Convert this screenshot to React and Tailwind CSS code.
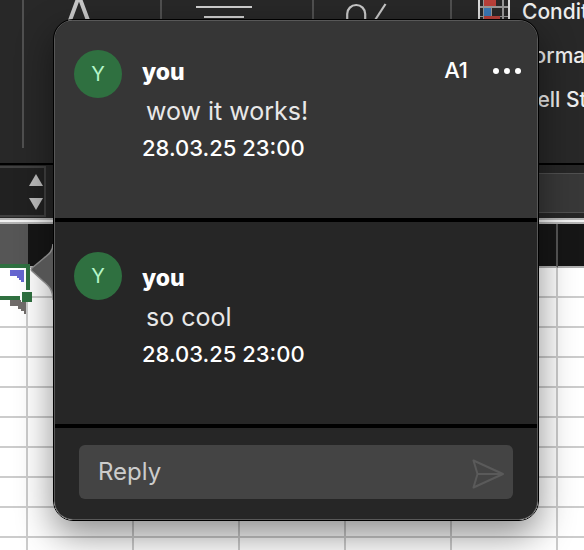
import React from "react";

const COLUMNS = [1, 2, 3, 4, 5, 6];
const ROWS = [1, 2, 3, 4, 5, 6, 7, 8, 9, 10];

const COMMENTS = [
  { id: "c1", author: "you", initial: "Y", text: "wow it works!", date: "28.03.25 23:00", cell: "A1" },
  { id: "c2", author: "you", initial: "Y", text: "so cool", date: "28.03.25 23:00" },
];

function Ribbon() {
  return (
    <div className="flex h-[163px] shrink-0 overflow-hidden bg-[#282828] text-[21px] leading-11 font-medium text-[#eeeeee]">
      <div className="h-[148px] w-6 shrink-0 border-r-2 border-[#505050]" />
      <div className="h-[148px] w-[138px] shrink-0 border-r-2 border-[#505050] pl-11">
        <svg width="24" height="36" viewBox="0 0 24 36" fill="none" stroke="#c8c8c8" strokeWidth="4" aria-hidden="true">
          <path d="M1 23 L11 -4 L21 23" />
        </svg>
      </div>
      <div className="h-[148px] w-[152px] shrink-0 border-r-2 border-[#505050] pl-[34px]">
        <svg width="56" height="30" viewBox="0 0 56 30" fill="#d0d0d0" aria-hidden="true">
          <path d="M0 6h56v2H0zM8 16h40v2H8zM0 26h56v2H0z" />
        </svg>
      </div>
      <div className="h-[148px] w-[138px] shrink-0 border-r-2 border-[#505050] pl-8">
        <svg width="48" height="40" viewBox="0 0 48 40" fill="none" stroke="#c8c8c8" strokeWidth="2.2" aria-hidden="true">
          <rect x="1.2" y="5" width="18" height="24" rx="9" />
          <path d="M39.5 4 L20 34" />
        </svg>
      </div>
      <div className="flex min-w-0 flex-1 gap-3 overflow-hidden pl-[26px] whitespace-nowrap">
        <svg className="shrink-0" width="32" height="32" viewBox="0 0 32 32" aria-hidden="true">
          <path d="M6 0h12v6H6zM6 16h16v6H6z" fill="#b8403a" />
          <path d="M6 8h7v8H6z" fill="#3b78b5" />
          <path d="M0 0h2v32H0zM30 0h2v32h-2z" fill="#dddddd" />
          <path d="M5 0h1v32H5zM24 0h2v32h-2zM2 6h28v2H2zM13 8h1v8h-1zM2 16h4v1H2zM22 16h8v1h-8z" fill="#999999" />
        </svg>
        <ul className="-mt-2.5">
          <li>Conditional Formatting</li>
          <li>Format as Table</li>
          <li>Cell Styles</li>
        </ul>
      </div>
    </div>
  );
}

function FormulaBar() {
  return (
    <div className="flex h-[55px] shrink-0 border-t-2 border-black bg-[#262626]">
      <div className="mt-px mb-px flex w-[46px] shrink-0 flex-col items-end justify-center gap-3 border-y-2 border-r-2 border-[#404040] bg-[#212121] pr-px">
        <svg width="14" height="12" viewBox="0 0 14 12" fill="#bcbcbc" aria-hidden="true"><path d="M7 0 14 12H0z" /></svg>
        <svg width="14" height="12" viewBox="0 0 14 12" fill="#bcbcbc" aria-hidden="true"><path d="M0 0H14L7 12z" /></svg>
      </div>
      <div className="mt-2 mb-[5px] ml-8 flex-1 border-y border-[#505050] bg-[#383838]" />
    </div>
  );
}

function CellMarks() {
  return (
    <svg className="absolute -top-1 left-0 z-10" width="34" height="52" viewBox="0 0 34 52" aria-hidden="true">
      <path d="M0 0H30V26H26V4H0z" fill="#2f7040" />
      <path d="M26 4h-2v22h2z" fill="#ffffff" />
      <path d="M0 30H20V26H32V38H20V38H0z" fill="#ffffff" />
      <path d="M0 32H20V36H0z" fill="#2f7040" />
      <path d="M10 6H24V18H21V16H19V14H17V12H10z" fill="#6666d0" />
      <path d="M10 36H21V38H26V50H24V47H21V45H18V42H10z" fill="#706c6a" />
      <path d="M22 28H32V38H22z" fill="#2f7040" />
    </svg>
  );
}

function Sheet() {
  return (
    <table className="w-full shrink-0 table-fixed border-separate border-spacing-0">
      <colgroup>
        <col className="w-7" />
        {COLUMNS.map((c) => (
          <col key={c} className={c === 6 ? "" : "w-[106px]"} />
        ))}
      </colgroup>
      <thead>
        <tr className="h-11">
          <th className="border-b-2 border-[#b0b0b0] bg-[#565656] p-0" />
          {COLUMNS.map((c) => (
            <th
              key={c}
              className="border-b-2 border-b-[#b0b0b0] bg-[#161616] p-0 not-last:border-r-2 not-last:border-r-[#555555]"
            />
          ))}
        </tr>
      </thead>
      <tbody>
        {ROWS.map((r) => (
          <tr key={r} className="h-[30px]">
            <td className="relative border-r-2 border-b-2 border-[#cccccc] p-0">{r === 1 && <CellMarks />}</td>
            {COLUMNS.map((c) => (
              <td key={c} className="border-b-2 border-[#cccccc] p-0 not-last:border-r-2" />
            ))}
          </tr>
        ))}
      </tbody>
    </table>
  );
}

function Comment({ comment }) {
  const active = Boolean(comment.cell);
  return (
    <article
      className={
        active
          ? "flex h-[201px] gap-5 border-b-4 border-black bg-[#363636] pt-[29px] pr-[11px] pl-[19px]"
          : "flex h-[206px] gap-5 border-b-4 border-black bg-[#262626] pt-[30px] pr-[11px] pl-[19px]"
      }
    >
      <div className="flex size-12 shrink-0 items-center justify-center rounded-full bg-[#2f7040] text-xl text-[#b4f5c8]">
        {comment.initial}
      </div>
      <div className={active ? "min-w-0 flex-1 pt-1" : "min-w-0 flex-1 pt-2"}>
        <header className="flex h-9 items-start">
          <h2 className="flex-1 text-[23px] leading-9 font-extrabold text-white">{comment.author}</h2>
          {active && (
            <>
              <span className="text-[22px] leading-8 font-medium">{comment.cell}</span>
              <button type="button" aria-label="More options" className="ml-5 flex h-[34px] items-center px-1">
                <svg width="30" height="8" viewBox="0 0 30 8" fill="#ffffff" aria-hidden="true">
                  <circle cx="4" cy="4" r="3" />
                  <circle cx="15" cy="4" r="3" />
                  <circle cx="26" cy="4" r="3" />
                </svg>
              </button>
            </>
          )}
        </header>
        <p className="pl-1 text-[25px] leading-[42px] text-[#e8e8e8]">{comment.text}</p>
        <time className="block text-[22px] leading-8 font-medium text-white">{comment.date}</time>
      </div>
    </article>
  );
}

function SendIcon() {
  return (
    <svg width="32" height="30" viewBox="0 0 32 30" fill="none" stroke="#5a5a5a" strokeWidth="2" strokeLinejoin="round" aria-hidden="true">
      <path d="M1.5 1.5 31 15 1.5 28.5 5.5 15z M5.5 15H31" />
    </svg>
  );
}

function CommentPopup() {
  return (
    <section aria-label="Comments" className="absolute top-[19px] right-[45px] left-[53px] z-20">
      <div className="overflow-hidden rounded-[20px] border border-black text-white shadow-[0_14px_36px_rgba(0,0,0,0.45)]">
        <div className="overflow-hidden rounded-[19px] border border-[#585858] bg-[#262626]">
          {COMMENTS.map((c) => (
            <Comment key={c.id} comment={c} />
          ))}
          <form className="px-6 pt-[17px] pb-5" onSubmit={(e) => e.preventDefault()}>
            <div className="flex h-[54px] items-center rounded-md bg-[#444444] pr-[9px] pl-[19px]">
              <input
                type="text"
                aria-label="Reply"
                placeholder="Reply"
                className="min-w-0 flex-1 bg-transparent text-[24px] text-white outline-none placeholder:text-[#cccccc]"
              />
              <button type="submit" aria-label="Send reply" className="pt-1">
                <SendIcon />
              </button>
            </div>
          </form>
        </div>
      </div>
      <svg className="absolute top-[221px] -left-6" width="24" height="64" viewBox="0 0 24 64" aria-hidden="true">
        <path d="M24 4 C24 11 20 14 15 18 L3 28 Q1.5 29.5 3 31 L14 41 C20 46 24 50 24 60z" fill="#555555" />
        <path d="M24 4 C24 11 20 14 15 18 L3 28 Q1.5 29.5 3 31 L14 41 C20 46 24 50 24 60" fill="none" stroke="#858585" strokeWidth="1.5" />
      </svg>
    </section>
  );
}

export default function App() {
  return (
    <main className="relative flex h-screen flex-col overflow-hidden bg-white font-['Inter','Liberation_Sans',sans-serif]">
      <Ribbon />
      <FormulaBar />
      <div className="h-1.5 shrink-0 border-y-2 border-[#b5b5b5] bg-[#f2f2f2]" />
      <Sheet />
      <CommentPopup />
    </main>
  );
}
